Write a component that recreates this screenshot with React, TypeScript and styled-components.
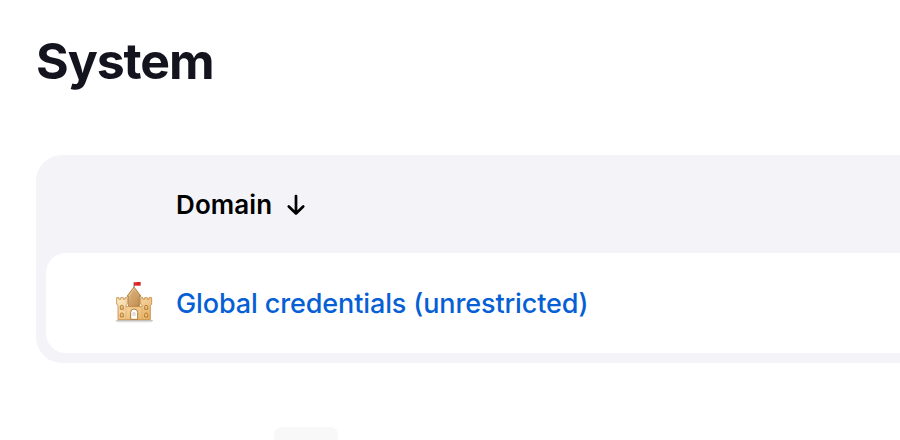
import React from "react";
import styled, { createGlobalStyle } from "styled-components";

const GlobalStyle = createGlobalStyle`
  *, *::before, *::after { box-sizing: border-box; }
  html, body { margin: 0; background: #fff; overflow: hidden; }
  body { font-family: Inter, "Liberation Sans", sans-serif; }
`;

const Page = styled.main`
  width: 900px;
  height: 440px;
  overflow: hidden;
  padding-left: 36px;
  display: flex;
  flex-direction: column;
`;

const Title = styled.h1`
  margin: 0;
  padding-top: 31px;
  height: 155px;
  flex: none;
  font-size: 50px;
  line-height: 60px;
  font-weight: 700;
  letter-spacing: -1.1px;
  color: #14141f;
`;

const Table = styled.section`
  flex: none;
  height: 208px;
  padding: 0 0 10px 10px;
  background: #f3f3f8;
  border-radius: 26px 0 0 26px;
`;

const HeaderRow = styled.div`
  height: 98px;
  padding: 2px 0 0 130px;
  display: flex;
  align-items: center;
  gap: 14px;
`;

const HeaderLabel = styled.span`
  font-size: 26px;
  line-height: 32px;
  font-weight: 600;
  letter-spacing: 0.1px;
  color: #000;
`;

const Row = styled.div`
  height: 100px;
  padding-left: 68px;
  display: flex;
  align-items: center;
  gap: 22px;
  background: #fff;
  border-radius: 20px 0 0 20px;
`;

const DomainLink = styled.a`
  padding-top: 2px;
  font-size: 27px;
  line-height: 32px;
  font-weight: 500;
  letter-spacing: -0.12px;
  white-space: nowrap;
  color: #065fd4;
  text-decoration: none;
`;

const Footer = styled.footer`
  flex: none;
  margin-top: 64px;
  padding-left: 238px;
`;

const SizeButton = styled.div`
  width: 64px;
  height: 40px;
  border-radius: 8px;
  background: #f8f8f8;
`;

const ArrowDown = () => (
  <svg width="20" height="24" viewBox="0 0 20 24" fill="none" stroke="#000" strokeWidth="2.7" strokeLinecap="round" strokeLinejoin="round">
    <path d="M10 3V20.5M2.8 13.5L10 20.5L17.2 13.5" />
  </svg>
);

const CastleIcon = styled.svg`
  flex: none;
  margin-bottom: 2px;
`;

const Castle = () => (
  <CastleIcon width="40" height="44" viewBox="30 24 120 132">
    <defs>
      <linearGradient id="wall" x1="0" y1="0" x2="1" y2="1">
        <stop offset="0" stopColor="#fdebcd" />
        <stop offset="1" stopColor="#e5ac58" />
      </linearGradient>
      <linearGradient id="keep" x1="0" y1="0" x2="1" y2="1">
        <stop offset="0" stopColor="#f4d7a4" />
        <stop offset="1" stopColor="#b98142" />
      </linearGradient>
      <linearGradient id="shadow" x1="0" y1="0" x2="0" y2="1">
        <stop offset="0" stopColor="#bbb" />
        <stop offset="1" stopColor="#fff" />
      </linearGradient>
    </defs>
    <path d="M35 144H147L143 153H39Z" fill="url(#shadow)" />
    <path d="M90 45V31" stroke="#777" strokeWidth="3" />
    <path d="M90 30H110V41H90Z" fill="#d92126" />
    <path d="M91 31H98V34H91Z" fill="#ef6668" />
    <path d="M74 103V73H69L90 45L111 73H106V103Z" fill="url(#keep)" stroke="#a96f2d" strokeWidth="2.5" />
    <path d="M78 72L90 53L102 72V99H78Z" fill="#c99860" opacity=".5" />
    <path d="M38 77H45V82H50V77H58V82H63V77H70V96L66 101V104H114V101L110 96V77H117V82H122V77H130V82H135V77H143V96L139 101V143H42V101L38 96Z" fill="url(#wall)" stroke="#c38a3d" strokeWidth="2.5" />
    <path d="M66 104V142M114 104V142" stroke="#deab62" strokeWidth="2" />
    <path d="M80 142V121Q80 111 90 111Q101 111 101 121V142Z" fill="#fff" stroke="#b67b35" strokeWidth="3" />
    <path d="M85 132V123Q90 116 95 123V132Z" fill="#ddd" />
    <g fill="#edc37d" stroke="#ab712c" strokeWidth="2.6">
      <path d="M49 112V104Q49 100 53 100Q58 100 58 104V112Z" />
      <path d="M49 135V127Q49 123 53 123Q58 123 58 127V135Z" />
      <path d="M122 112V104Q122 100 126 100Q131 100 131 104V112Z" />
      <path d="M122 135V127Q122 123 126 123Q131 123 131 127V135Z" />
    </g>
  </CastleIcon>
);

export default function App() {
  return (
    <>
      <GlobalStyle />
      <Page>
        <Title>System</Title>
        <Table>
          <HeaderRow>
            <HeaderLabel>Domain</HeaderLabel>
            <ArrowDown />
          </HeaderRow>
          <Row>
            <Castle />
            <DomainLink>Global credentials (unrestricted)</DomainLink>
          </Row>
        </Table>
        <Footer>
          <SizeButton />
        </Footer>
      </Page>
    </>
  );
}
